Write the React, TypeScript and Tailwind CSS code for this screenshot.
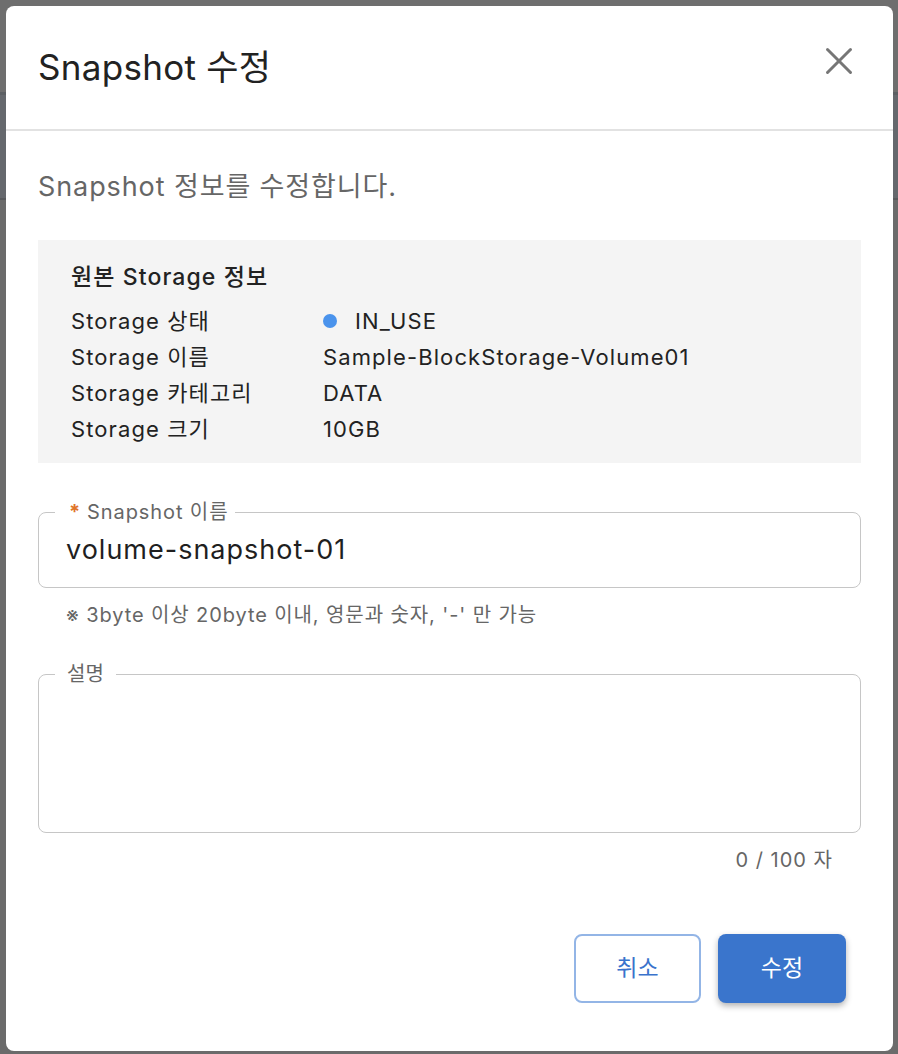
import React from "react";

const font = { fontFamily: 'Inter, "Noto Sans CJK KR", sans-serif' };

const storageInfo = [
  { label: "Storage 상태", value: "IN_USE", status: true },
  { label: "Storage 이름", value: "Sample-BlockStorage-Volume01" },
  { label: "Storage 카테고리", value: "DATA" },
  { label: "Storage 크기", value: "10GB" },
];

function CloseIcon() {
  return (
    <svg width="28" height="28" viewBox="0 0 28 28" fill="none" stroke="#767676" strokeWidth="3" strokeLinecap="round">
      <line x1="2.5" y1="2.5" x2="25.5" y2="25.5" />
      <line x1="25.5" y1="2.5" x2="2.5" y2="25.5" />
    </svg>
  );
}

export default function App() {
  return (
    <div className="relative h-[1054px] w-full overflow-hidden bg-[#6b6b6b]" style={font}>
      {/* page behind the modal */}
      <div className="h-[92px] bg-[#6e6e6e]" />
      <div className="h-[3px] bg-[#5c5f63]" />
      <div className="h-[103px] bg-[#65686d]" />
      <div className="h-[2px] bg-[#585a5d]" />

      <div className="absolute left-[6px] top-[6px] flex h-[1045px] w-[887px] flex-col rounded-[8px] bg-white">
        <div className="flex h-[125px] items-center justify-between border-b-2 border-[#e2e2e2] pl-[32px] pr-[40px]">
          <h1 className="text-[35px] font-normal tracking-[0.3px] text-[#222]">Snapshot 수정</h1>
          <button className="-mt-[14px] flex items-center justify-center">
            <CloseIcon />
          </button>
        </div>

        <div className="flex flex-1 flex-col px-[32px]">
          <p className="mt-[38px] text-[27px] leading-[36px] tracking-[0.9px] text-[#666]">Snapshot 정보를 수정합니다.</p>

          <div className="mt-[35px] bg-[#f4f4f4] px-[33px] pb-[16px] pt-[20px]">
            <h2 className="text-[23px] font-medium leading-[34px] tracking-[1.1px] text-[#222]">원본 Storage 정보</h2>
            <div className="mt-[9px] flex flex-col">
              {storageInfo.map((row) => (
                <div key={row.label} className="flex h-[36px] items-center text-[22px] tracking-[1.1px] text-[#222]">
                  <span className="w-[252px] shrink-0">{row.label}</span>
                  {row.status ? (
                    <span className="flex items-center gap-[18px]">
                      <span className="h-[14px] w-[14px] rounded-full bg-[#4a93ec]" />
                      {row.value}
                    </span>
                  ) : (
                    <span>{row.value}</span>
                  )}
                </div>
              ))}
            </div>
          </div>

          <fieldset className="mt-[37px] h-[88px] rounded-[8px] border-[1.5px] border-[#c6c6c6]">
            <legend className="ml-[16px] pl-[14px] pr-[7px] text-[20px] leading-[24px] tracking-[0.9px] text-[#666]">
              <span className="mr-[6px] font-bold text-[#e0742a]">*</span>Snapshot 이름
            </legend>
            <div className="px-[27px] pt-[8px] text-[27px] leading-[36px] tracking-[1px] text-[#1f1f1f]">volume-snapshot-01</div>
          </fieldset>

          <p className="mt-[13px] pl-[28px] text-[20px] leading-[28px] tracking-[0.9px] text-[#666]">
            ※ 3byte 이상 20byte 이내, 영문과 숫자, '-' 만 가능
          </p>

          <fieldset className="mt-[33px] h-[171px] rounded-[8px] border-[1.5px] border-[#c6c6c6]">
            <legend className="ml-[16px] px-[12px] text-[20px] leading-[24px] text-[#666]">설명</legend>
          </fieldset>

          <div className="mt-[13px] pr-[28px] text-right text-[20px] leading-[28px] tracking-[1px] text-[#666]">0 / 100 자</div>

          <div className="mt-[60px] flex justify-end gap-[17px] pr-[15px]">
            <button className="h-[69px] w-[127px] rounded-[8px] border-2 border-[#93b5e6] bg-white text-[23px] text-[#3a73cc]">
              취소
            </button>
            <button className="h-[69px] w-[128px] rounded-[8px] bg-[#3a75cc] text-[23px] text-white shadow-[0_3px_6px_rgba(0,0,0,0.3)]">
              수정
            </button>
          </div>
        </div>
      </div>
    </div>
  );
}
